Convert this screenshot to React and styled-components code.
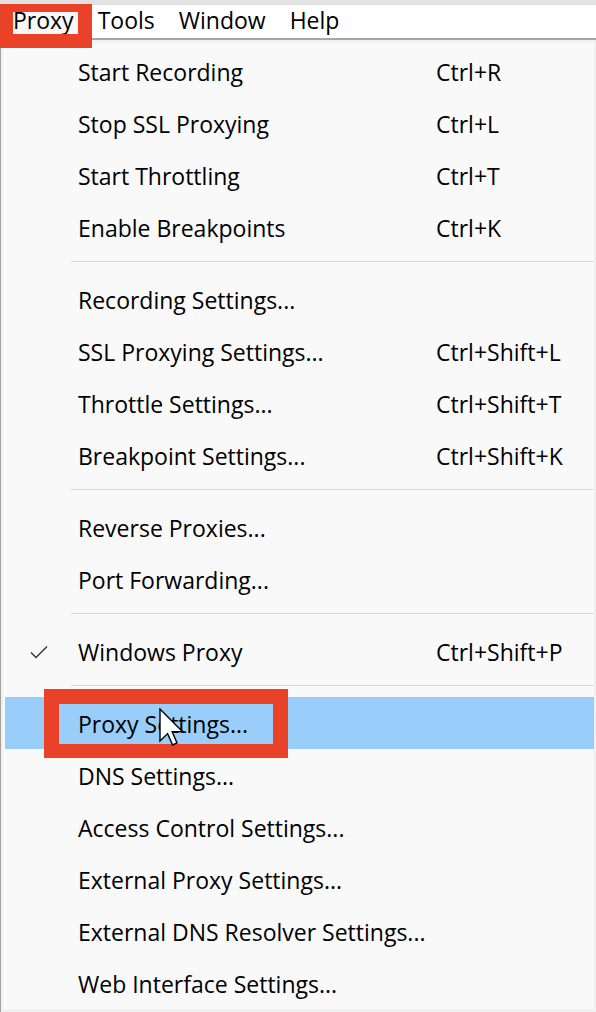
import React from "react";
import styled, { createGlobalStyle } from "styled-components";

const Global = createGlobalStyle`
  html, body { margin: 0; padding: 0; background: #f0f0f0; }
  body { font-family: "Open Sans", "Noto Sans", sans-serif; color: #000; }
  * { box-sizing: border-box; }
`;

const Page = styled.div`
  position: relative;
  width: 596px;
  height: 1012px;
  overflow: hidden;
  background: #f0f0f0;
`;

const MenuBar = styled.div`
  display: flex;
  align-items: center;
  height: 40px;
  padding-left: 1px;
  background: #fff;
  border-top: 5px solid #e2e2e2;
  border-bottom: 2px solid #a6a6a6;
`;

const BarItem = styled.div`
  height: 100%;
  display: flex;
  align-items: center;
  padding: 0 12px 4px;
  font-size: 23px;
  background: ${(p) => (p.$open ? "#f7f7f7" : "transparent")};
`;

const Frame = styled.div`
  border-left: 1px solid #a3a3a3;
  padding: 3px 2px 4px 2px;
  background: #f0f0f0;
`;

const Panel = styled.div`
  background: #f9f9f9;
  padding: 2px 0 0 2px;
  display: flex;
  flex-direction: column;
`;

const Item = styled.div`
  display: grid;
  grid-template-columns: 73px 358px 1fr;
  align-items: center;
  height: 52px;
  padding-top: 2px;
  font-size: 23px;
  background: ${(p) => (p.$active ? "#99cdfa" : "transparent")};
`;

const CheckCell = styled.div`
  display: flex;
  align-items: center;
  padding-left: 25px;
`;

const Label = styled.span`
  white-space: nowrap;
`;

const Shortcut = styled.span`
  white-space: nowrap;
`;

const Separator = styled.div`
  height: 20px;
  padding: 8px 0 0 66px;
  &::after {
    content: "";
    display: block;
    height: 1px;
    width: 522px;
    background: #d6d6d6;
  }
`;

const RedBox = styled.div`
  position: absolute;
  left: ${(p) => p.$x}px;
  top: ${(p) => p.$y}px;
  width: ${(p) => p.$w}px;
  height: ${(p) => p.$h}px;
  border-style: solid;
  border-color: #ea4129;
  border-width: ${(p) => p.$bw};
  pointer-events: none;
`;

const Cursor = styled.svg`
  position: absolute;
  left: 159px;
  top: 708px;
`;

const groups = [
  [
    ["Start Recording", "Ctrl+R"],
    ["Stop SSL Proxying", "Ctrl+L"],
    ["Start Throttling", "Ctrl+T"],
    ["Enable Breakpoints", "Ctrl+K"],
  ],
  [
    ["Recording Settings...", ""],
    ["SSL Proxying Settings...", "Ctrl+Shift+L"],
    ["Throttle Settings...", "Ctrl+Shift+T"],
    ["Breakpoint Settings...", "Ctrl+Shift+K"],
  ],
  [
    ["Reverse Proxies...", ""],
    ["Port Forwarding...", ""],
  ],
  [["Windows Proxy", "Ctrl+Shift+P", "check"]],
  [
    ["Proxy Settings...", "", "active"],
    ["DNS Settings...", ""],
    ["Access Control Settings...", ""],
    ["External Proxy Settings...", ""],
    ["External DNS Resolver Settings...", ""],
    ["Web Interface Settings...", ""],
  ],
];

const Check = () => (
  <svg width="18" height="14" viewBox="0 0 18 14">
    <path d="M1 7.5 L6 12.5 L17 1.5" fill="none" stroke="#333" strokeWidth="1.4" />
  </svg>
);

export default function App() {
  return (
    <Page>
      <Global />
      <MenuBar>
        <BarItem $open>Proxy</BarItem>
        <BarItem>Tools</BarItem>
        <BarItem>Window</BarItem>
        <BarItem>Help</BarItem>
      </MenuBar>
      <Frame>
        <Panel>
          {groups.map((g, gi) => (
            <React.Fragment key={gi}>
              {gi > 0 && <Separator />}
              {g.map(([label, sc, flag]) => (
                <Item key={label} $active={flag === "active"}>
                  <CheckCell>{flag === "check" && <Check />}</CheckCell>
                  <Label>{label}</Label>
                  <Shortcut>{sc}</Shortcut>
                </Item>
              ))}
            </React.Fragment>
          ))}
        </Panel>
      </Frame>
      <RedBox $x={0} $y={4} $w={92} $h={44} $bw="8px 14px 14px 13px" />
      <RedBox $x={44} $y={689} $w={244} $h={69} $bw="15px 15px 14px 15px" />
      <Cursor width="26" height="38" viewBox="0 0 13 19">
        <path
          d="M0.5 0.5 L0.5 16.5 L4.3 12.8 L6.8 18.5 L9 17.5 L6.6 11.9 L11.8 11.9 Z"
          fill="#fff"
          stroke="#000"
          strokeWidth="0.7"
          strokeLinejoin="miter"
        />
      </Cursor>
    </Page>
  );
}
